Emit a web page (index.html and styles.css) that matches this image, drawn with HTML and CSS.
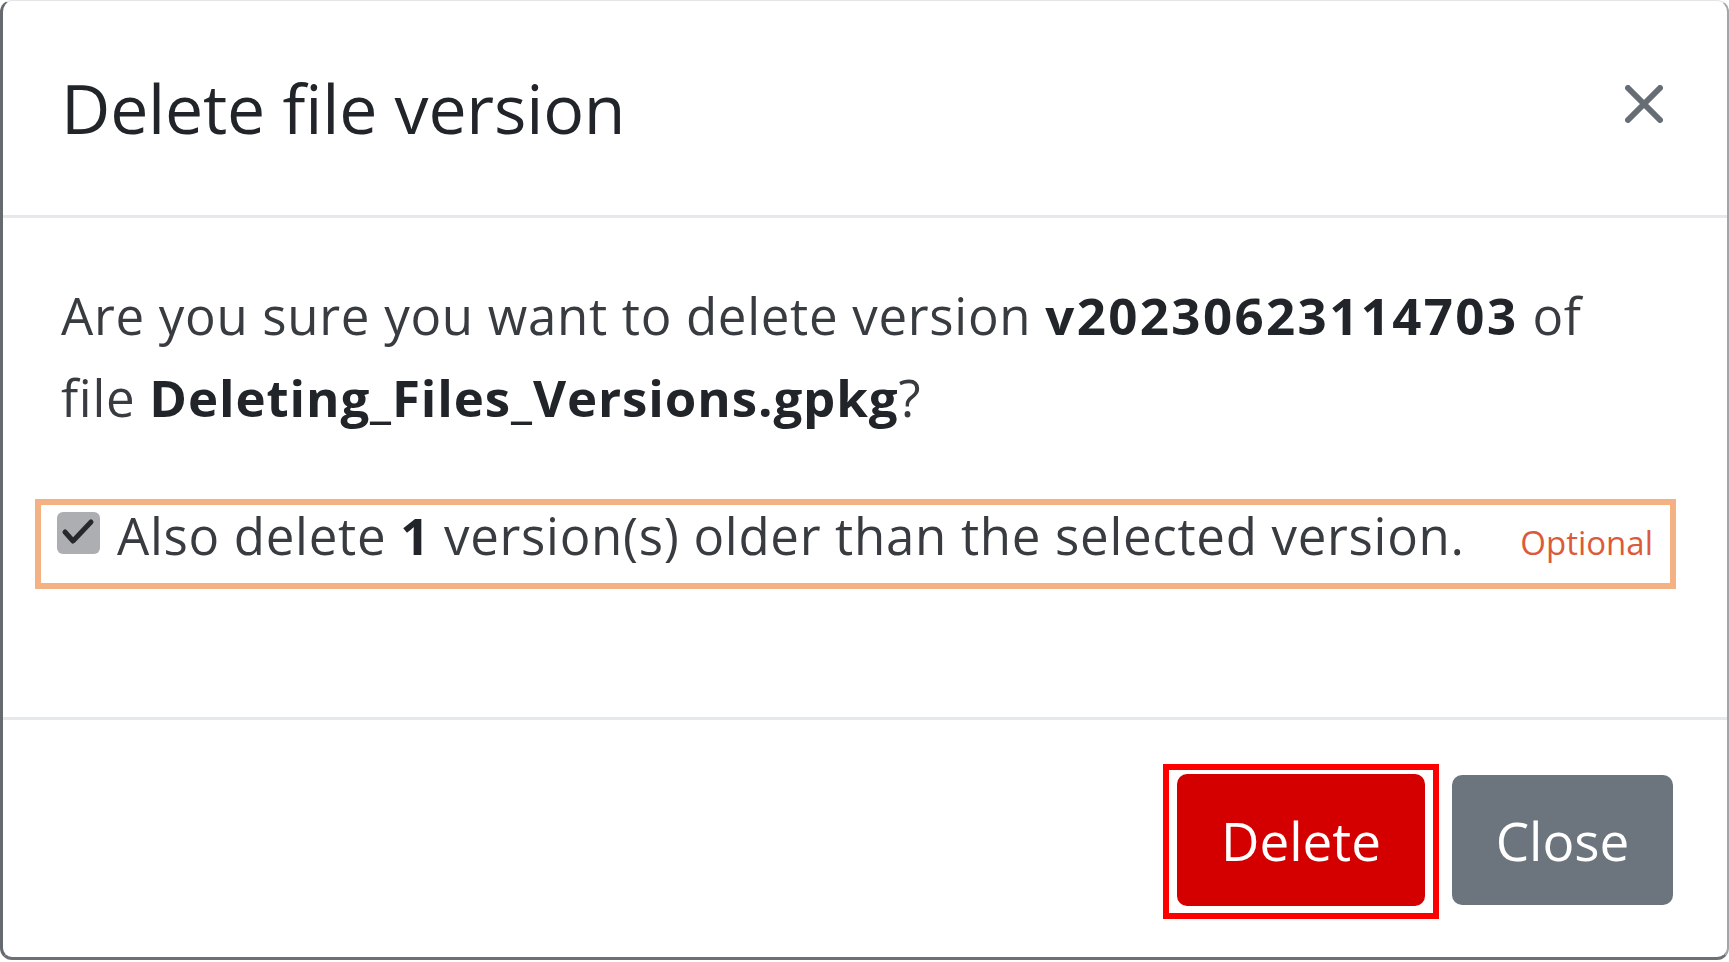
FILE: index.html
```html
<!DOCTYPE html>
<html lang="en">
<head>
<meta charset="utf-8">
<title>Delete file version</title>
<link rel="stylesheet" href="styles.css">
</head>
<body>
<div class="modal">
  <div class="modal-header">
    <h5 class="modal-title">Delete file version</h5>
    <button class="btn-close" type="button" aria-label="Close">
      <svg width="38" height="38" viewBox="0 0 38 38"><path d="M3 3 L35 35 M35 3 L3 35" stroke="#676d74" stroke-width="6" stroke-linecap="round" fill="none"/></svg>
    </button>
  </div>
  <div class="modal-body">
    <p class="question">Are you sure you want to delete version <b class="version">v20230623114703</b> of file <b class="filename">Deleting_Files_Versions.gpkg</b>?</p>
    <div class="check-row">
      <span class="checkbox">
        <svg width="43" height="42" viewBox="0 0 43 42"><path d="M8 20 L16 29 L34 10" stroke="#26282b" stroke-width="5" stroke-linecap="round" stroke-linejoin="round" fill="none"/></svg>
      </span>
      <label class="check-label">Also delete <b>1</b> version(s) older than the selected version.</label>
      <span class="optional">Optional</span>
    </div>
  </div>
  <div class="modal-footer">
    <div class="highlight">
      <button class="btn btn-delete" type="button">Delete</button>
    </div>
    <button class="btn btn-close-secondary" type="button">Close</button>
  </div>
</div>
</body>
</html>
```

FILE: styles.css
```css
html, body {
  margin: 0;
  padding: 0;
  background: #ffffff;
}

body {
  font-family: "Open Sans", "Noto Sans", "Liberation Sans", sans-serif;
  color: #212529;
}

.modal {
  box-sizing: border-box;
  width: 1729px;
  height: 960px;
  display: flex;
  flex-direction: column;
  background: #ffffff;
  border-top: 1px solid #e4e5e6;
  border-left: 3px solid #666a6f;
  border-right: 2px solid #a2a5a9;
  border-bottom: 3px solid #6d7176;
  border-radius: 12px;
  overflow: hidden;
}

.modal-header {
  box-sizing: border-box;
  height: 217px;
  flex: none;
  display: flex;
  align-items: center;
  justify-content: space-between;
  padding: 0 58px;
  border-bottom: 3px solid #e6e9eb;
}

.modal-title {
  margin: 0;
  font-size: 68px;
  font-weight: 400;
  line-height: 82px;
  letter-spacing: -0.2px;
  color: #212529;
}

.btn-close {
  display: block;
  width: 38px;
  height: 38px;
  padding: 0;
  margin: -9px 6px 0 0;
  border: 0;
  background: transparent;
}

.btn-close svg {
  display: block;
}

.modal-body {
  flex: 1;
  padding: 56px 51px 0 58px;
}

.question {
  margin: 0;
  padding-right: 40px;
  font-size: 51px;
  line-height: 82px;
  letter-spacing: 0.7px;
  color: #383c40;
}

.question b {
  font-weight: 700;
  color: #212529;
}

.question .version {
  letter-spacing: 2.4px;
}

.question .filename {
  letter-spacing: 0.9px;
}

.check-row {
  box-sizing: border-box;
  height: 90px;
  margin: 61px 0 0 -26px;
  border: 6px solid #f4b183;
  display: flex;
  align-items: baseline;
  padding: 0 17px 0 16px;
}

.checkbox {
  align-self: flex-start;
  margin-top: 7px;
  width: 43px;
  height: 42px;
  flex: none;
  border-radius: 6px;
  background: #acaeb2;
}

.checkbox svg {
  display: block;
}

.check-label {
  margin-left: 17px;
  font-size: 51px;
  line-height: 60px;
  letter-spacing: 0.7px;
  color: #383c40;
}

.check-label b {
  color: #212529;
}

.optional {
  margin-left: auto;
  font-size: 33px;
  color: #dc5a3c;
}

.modal-footer {
  box-sizing: border-box;
  height: 240px;
  flex: none;
  border-top: 3px solid #e6e9eb;
  display: flex;
  justify-content: flex-end;
  align-items: flex-start;
  gap: 13px;
  padding: 44px 54px 0 0;
}

.highlight {
  border: 6px solid #ff0000;
  padding: 4px 8px 7px 8px;
}

.btn {
  display: flex;
  align-items: center;
  justify-content: center;
  height: 132px;
  border: 0;
  border-radius: 10px;
  font-family: "Open Sans", "Noto Sans", "Liberation Sans", sans-serif;
  font-size: 53px;
  color: #ffffff;
  padding: 0;
}

.btn-delete {
  width: 248px;
  background: #d40000;
}

.btn-close-secondary {
  width: 221px;
  height: 130px;
  margin-top: 11px;
  background: #6c757d;
}
```
